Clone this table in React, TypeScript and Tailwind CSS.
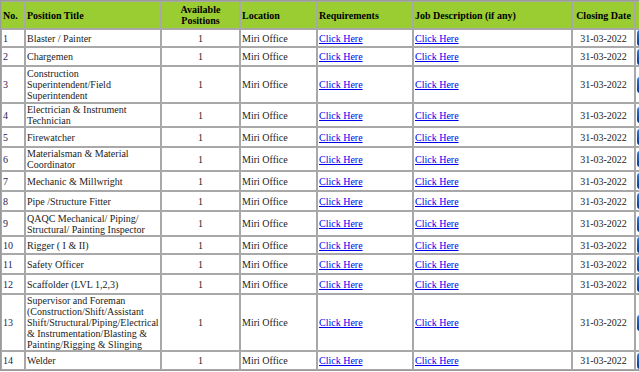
import React from "react";

type Row = { no: string; title: string; h: string };

const rows: Row[] = [
  { no: "1", title: "Blaster / Painter", h: "h-[18px]" },
  { no: "2", title: "Chargemen", h: "h-[19px]" },
  { no: "3", title: "Construction Superintendent/Field Superintendent", h: "h-[37px]" },
  { no: "4", title: "Electrician & Instrument Technician", h: "h-[24px]" },
  { no: "5", title: "Firewatcher", h: "h-[20px]" },
  { no: "6", title: "Materialsman & Material Coordinator", h: "h-[24px]" },
  { no: "7", title: "Mechanic & Millwright", h: "h-[20px]" },
  { no: "8", title: "Pipe /Structure Fitter", h: "h-[20px]" },
  { no: "9", title: "QAQC Mechanical/ Piping/ Structural/ Painting Inspector", h: "h-[25px]" },
  { no: "10", title: "Rigger ( I & II)", h: "h-[18px]" },
  { no: "11", title: "Safety Officer", h: "h-[20px]" },
  { no: "12", title: "Scaffolder (LVL 1,2,3)", h: "h-[20px]" },
  {
    no: "13",
    title:
      "Supervisor and Foreman (Construction/Shift/Assistant Shift/Structural/Piping/Electrical & Instrumentation/Blasting & Painting/Rigging & Slinging",
    h: "h-[57px]",
  },
  { no: "14", title: "Welder", h: "h-[19px]" },
];

const cell = "border border-[#a8a8a8] px-[1px] py-0 align-middle";
const th = "border border-[#a8a8a8] px-[1px] py-[2px] align-middle font-bold text-black";

export default function App() {
  return (
    <div className="w-[639px] h-[372px] overflow-hidden bg-white">
      <table className="w-[680px] table-fixed border-separate border-spacing-0 border border-[#9a9a9a] font-['Liberation_Serif',serif] text-[10px] leading-[11px] text-[#222]">
        <colgroup>
          <col className="w-[24px]" />
          <col className="w-[136px]" />
          <col className="w-[79px]" />
          <col className="w-[77px]" />
          <col className="w-[96px]" />
          <col className="w-[159px]" />
          <col className="w-[63px]" />
          <col className="w-[45px]" />
        </colgroup>
        <thead>
          <tr className="h-[27px] bg-[#9acd32]">
            <th className={`${th} text-left`}>No.</th>
            <th className={`${th} text-left`}>Position Title</th>
            <th className={`${th} text-center`}>
              Available
              <br />
              Positions
            </th>
            <th className={`${th} text-left`}>Location</th>
            <th className={`${th} text-left`}>Requirements</th>
            <th className={`${th} text-left`}>Job Description (if any)</th>
            <th className={`${th} text-center`}>Closing Date</th>
            <th className={th}></th>
          </tr>
        </thead>
        <tbody>
          {rows.map((r) => (
            <tr key={r.no} className={r.h}>
              <td className={`${cell} text-[#2a1850]`}>{r.no}</td>
              <td className={cell}>{r.title}</td>
              <td className={`${cell} text-center`}>1</td>
              <td className={cell}>Miri Office</td>
              <td className={cell}>
                <a href="#" className="text-[#0000ee] underline">
                  Click Here
                </a>
              </td>
              <td className={cell}>
                <a href="#" className="text-[#0000ee] underline">
                  Click Here
                </a>
              </td>
              <td className={`${cell} text-center`}>31-03-2022</td>
              <td className={cell}>
                <div className="h-[16px] w-[40px] rounded-[3px] bg-gradient-to-b from-[#3f7fd6] via-[#1a56b0] to-[#0c3a86]"></div>
              </td>
            </tr>
          ))}
        </tbody>
      </table>
    </div>
  );
}
